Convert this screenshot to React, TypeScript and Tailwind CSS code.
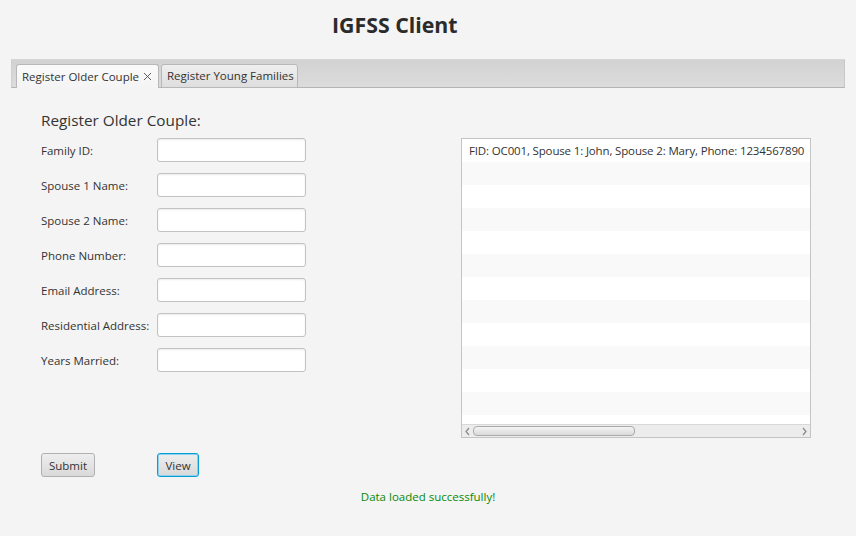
import { X } from "lucide-react";

const fields = [
  "Family ID:",
  "Spouse 1 Name:",
  "Spouse 2 Name:",
  "Phone Number:",
  "Email Address:",
  "Residential Address:",
  "Years Married:",
];

const rows = [
  "FID: OC001, Spouse 1: John, Spouse 2: Mary, Phone: 1234567890",
  "", "", "", "", "", "", "", "", "", "", "", "",
];

export default function App() {
  return (
    <div className="flex h-[536px] w-[856px] flex-col bg-[#f4f4f4] font-['Open_Sans',sans-serif] text-[11.5px] text-[#333]">
      {/* Title */}
      <div className="flex h-[50px] items-center pl-[332px] text-[21.3px] font-bold text-[#2b2b2b]">
        IGFSS Client
      </div>

      {/* Tab pane */}
      <div className="mx-[11px] mt-[9px] flex flex-col">
        <div className="flex h-[29px] items-end gap-[2px] border border-b-[#b4b4b4] border-l-[#d0d0d0] border-r-[#c8c8c8] border-t-[#d6d6d6] bg-gradient-to-b from-[#d2d2d2] to-[#dcdcdc] pl-[4px]">
          <div className="-mb-px flex h-[24px] w-[143px] items-center gap-[2px] rounded-t-[3px] border border-b-0 border-[#b8b8b8] bg-gradient-to-b from-[#fafafa] to-[#f4f4f4] pl-[5px]">
            <span>Register Older Couple</span>
            <X className="h-[13px] w-[13px] text-[#444]" strokeWidth={1.6} />
          </div>
          <div className="-mb-px flex h-[24px] w-[137px] items-center rounded-t-[3px] border border-[#b8b8b8] bg-gradient-to-b from-[#efefef] to-[#dedede] pl-[5px]">
            Register Young Families
          </div>
        </div>

        {/* Content */}
        <div className="flex flex-col pl-[30px]">
          <div className="mt-[22px] text-[15.3px] leading-[20px] text-[#333]">Register Older Couple:</div>

          <div className="mt-[8px] flex">
            <div className="flex w-[420px] flex-col gap-[11px]">
              {fields.map((f) => (
                <div key={f} className="flex h-[24px] items-center">
                  <span className="w-[116px] pt-[2px]">{f}</span>
                  <div className="h-[24px] w-[149px] rounded-[3px] border border-[#c2c2c2] bg-white shadow-[inset_0_1px_2px_rgba(0,0,0,0.08)]" />
                </div>
              ))}
            </div>

            {/* List view */}
            <div className="flex h-[300px] w-[350px] flex-col border border-[#c4c4c4] bg-white">
              <div className="flex-1 overflow-hidden">
                {rows.map((r, i) => (
                  <div
                    key={i}
                    className={`flex h-[23px] items-center whitespace-nowrap pl-[7px] tracking-[-0.15px] ${i % 2 === 1 ? "bg-[#f9f9f9]" : "bg-white"}`}
                  >
                    {r}
                  </div>
                ))}
              </div>
              <div className="flex h-[13px] items-center border-t border-[#d8d8d8] bg-[#ececec] px-[2px]">
                <svg width="7" height="9" viewBox="0 0 7 9" className="text-[#888]">
                  <path d="M5 1 L2 4.5 L5 8" fill="none" stroke="currentColor" strokeWidth="1.2" />
                </svg>
                <div className="ml-[2px] h-[10px] w-[162px] rounded-[4px] border border-[#aaa] bg-gradient-to-b from-[#f4f4f4] to-[#dadada]" />
                <div className="flex-1" />
                <svg width="7" height="9" viewBox="0 0 7 9" className="text-[#888]">
                  <path d="M2 1 L5 4.5 L2 8" fill="none" stroke="currentColor" strokeWidth="1.2" />
                </svg>
              </div>
            </div>
          </div>

          {/* Buttons */}
          <div className="mt-[15px] flex">
            <div className="w-[116px]">
              <button className="flex h-[24px] w-[54px] items-center justify-center rounded-[3px] border border-[#b0b0b0] bg-gradient-to-b from-[#eeeeee] to-[#d9d9d9] pt-[1px] text-[#333]">
                Submit
              </button>
            </div>
            <button className="flex h-[24px] w-[42px] items-center justify-center rounded-[3px] border border-[#039ed3] bg-gradient-to-b from-[#eeeeee] to-[#d9d9d9] pt-[1px] text-[#333] shadow-[inset_0_0_0_1px_#8fd1ee]">
              View
            </button>
          </div>
        </div>

        <div className="mt-[10px] flex h-[20px] items-center justify-center text-[#078a07]">
          Data loaded successfully!
        </div>
      </div>
    </div>
  );
}
